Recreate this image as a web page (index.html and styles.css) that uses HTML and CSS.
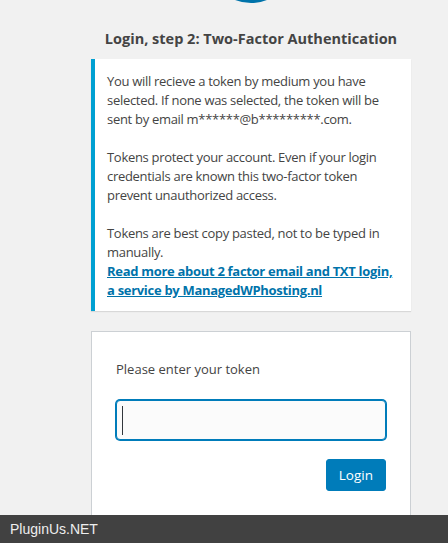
FILE: index.html
```html
<!DOCTYPE html>
<html>
<head>
<meta charset="utf-8">
<link rel="stylesheet" href="styles.css">
</head>
<body>
<div class="login">
  <div class="logo">
    <svg width="84" height="84" viewBox="0 0 84 84"><circle cx="42" cy="42" r="40.5" fill="none" stroke="#0073aa" stroke-width="3"/></svg>
  </div>
  <h1 class="title">Login, step 2: Two-Factor Authentication</h1>
  <div class="message">
    <p>You will recieve a token by medium you have selected. If none was selected, the token will be sent by email m******@b*********.com.<br><br>Tokens protect your account. Even if your login credentials are known this two-factor token prevent unauthorized access.<br><br>Tokens are best copy pasted, not to be typed in manually.<br><a href="#" class="more">Read more about 2 factor email and TXT login, a service by ManagedWPhosting.nl</a></p>
  </div>
  <form class="form">
    <label class="label">Please enter your token</label>
    <div class="field"><input class="input" type="text"></div>
    <div class="actions"><button type="button" class="button">Login</button></div>
  </form>
</div>
<div class="footer">PluginUs.NET</div>
</body>
</html>
```
FILE: styles.css
```css
html, body {
  margin: 0;
  padding: 0;
  background: #f1f1f1;
  height: 100%;
  overflow: hidden;
}
body {
  font-family: "Open Sans", sans-serif;
  color: #444;
}
.login {
  width: 320px;
  margin-left: 91px;
}
.logo {
  height: 3px;
  overflow: hidden;
  display: flex;
  justify-content: center;
  align-items: flex-end;
}
.logo svg {
  flex: none;
}
.title {
  margin: 0;
  padding: 26px 0 0;
  height: 30px;
  text-align: center;
  font-size: 14.5px;
  font-weight: 700;
  line-height: 20px;
  color: #444;
}
.message {
  margin-top: 0;
  background: #fff;
  border-left: 4px solid #00a0d2;
  box-shadow: 0 1px 1px 0 rgba(0,0,0,.1);
  padding: 13px 12px 11px;
}
.message p {
  margin: 0;
  font-size: 13px;
  letter-spacing: -0.3px;
  line-height: 19px;
}
.more {
  color: #0073aa;
  font-weight: 700;
  text-decoration: underline;
}
.form {
  margin-top: 20px;
  background: #fff;
  border: 1px solid #ccd0d4;
  padding: 27px 24px 46px;
  height: 300px;
}
.label {
  display: block;
  font-size: 13px;
  line-height: 21px;
}
.field {
  position: relative;
  margin: 20px 0 19px;
}
.field::after {
  content: "";
  position: absolute;
  left: 6px;
  top: 6px;
  width: 1px;
  height: 29px;
  background: #32373c;
}
.input {
  display: block;
  box-sizing: border-box;
  width: 100%;
  height: 40px;
  margin: 0;
  border: 1px solid #007cba;
  box-shadow: 0 0 0 1px #007cba;
  border-radius: 4px;
  background: #fbfbfb;
  outline: none;
  padding: 0 6px;
  font-size: 24px;
  color: #32373c;
}
.actions {
  display: flex;
  justify-content: flex-end;
}
.button {
  height: 32px;
  padding: 0 12px;
  border: 1px solid #007cba;
  border-radius: 3px;
  background: #007cba;
  color: #fff;
  font-family: "Open Sans", sans-serif;
  font-size: 13.5px;
}
.footer {
  position: fixed;
  left: 0;
  right: 0;
  bottom: 0;
  height: 28px;
  background: #414141;
  color: #eee;
  font-family: "Liberation Sans", sans-serif;
  font-size: 14px;
  line-height: 28px;
  padding-left: 10px;
}
```
